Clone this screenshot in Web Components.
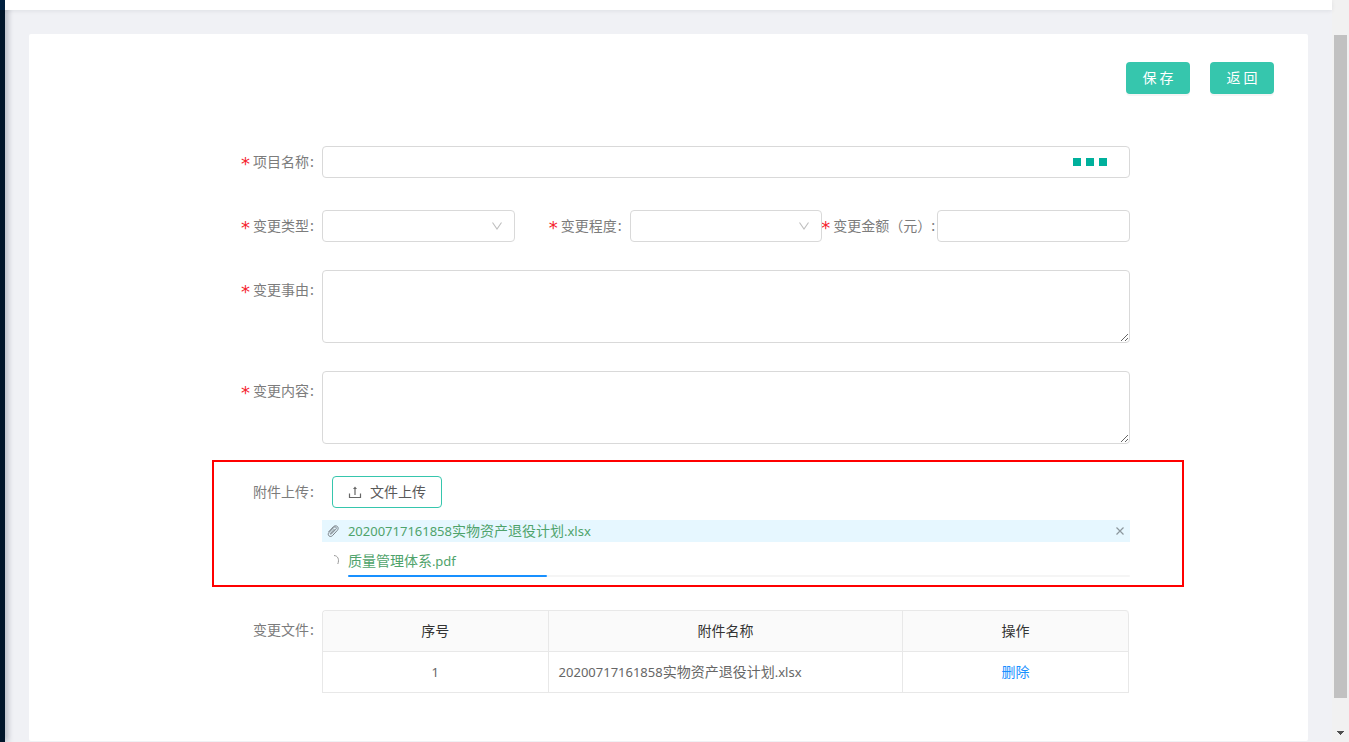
<!DOCTYPE html>
<html lang="zh-CN">
<head>
<meta charset="utf-8">
<title>项目变更</title>
<style>
  html, body { height: 100%; margin: 0; }
  body {
    font: 14px/22px "Noto Sans CJK SC", sans-serif;
    color: #666;
    background: #f0f2f5;
    overflow: hidden;
  }
</style>
</head>
<body>
<app-shell>
  <form-panel>
    <action-button slot="actions">保 存</action-button>
    <action-button slot="actions">返 回</action-button>

    <field-row><form-field kind="picker" label="项目名称" required></form-field></field-row>
    <field-row>
      <form-field kind="select" label="变更类型" required></form-field>
      <form-field kind="select" label="变更程度" required></form-field>
      <form-field kind="text" label="变更金额（元）" required wide></form-field>
    </field-row>
    <field-row><form-field kind="area" label="变更事由" required></form-field></field-row>
    <field-row><form-field kind="area" label="变更内容" required></form-field></field-row>
    <upload-section>
      <file-item name="20200717161858实物资产退役计划.xlsx"></file-item>
      <file-item name="质量管理体系.pdf" progress="25.4"></file-item>
    </upload-section>
    <file-table></file-table>
  </form-panel>
</app-shell>

<script>
const base = `<style>
  *, *::before, *::after { box-sizing: border-box; }
  :host { display: block; box-sizing: border-box; }
  button, input, select, textarea { font: inherit; color: inherit; margin: 0; }
  svg { display: block; flex: none; }
  a { text-decoration: none; }
  .latin { font-family: "Noto Sans", sans-serif; font-size: 13px; }
</style>`;

const labelStyle = `<style>
  .label {
    display: flex; align-items: center; justify-content: flex-end;
    height: 40px; padding: 0 8px 2px 0; white-space: nowrap; color: #7c7c7c;
  }
  .star { color: #f5222d; font: 18px/18px "DejaVu Sans", sans-serif; padding-top: 6px; margin-right: 3px; }
  .colon { margin-left: 1px; }
</style>`;

/* Runs of Latin letters and digits in a file name get their own face. */
const mixed = text => text.replace(/[\x21-\x7e]+/g, '<span class="latin">$&</span>');

function define(name, render) {
  customElements.define(name, class extends HTMLElement {
    connectedCallback() {
      if (this.shadowRoot) return;
      this.attachShadow({ mode: 'open' }).innerHTML = base + render(this);
    }
  });
}

define('app-shell', () => `
  <style>
    :host { display: flex; height: 100vh; overflow: hidden; }
    .side { flex: none; width: 5px; background: linear-gradient(#002140 10px, #001529 10px); box-shadow: 2px 0 6px rgba(0,21,41,.35); z-index: 1; }
    main { flex: 1; min-width: 0; background: #f0f1f5; }
    header { height: 10px; background: #fff; box-shadow: 0 1px 4px rgba(0,21,41,.08); position: relative; z-index: 2; }
    .content { padding: 24px; }
    .bar { flex: none; width: 17px; padding: 35px 2px 5px; background: #f1f1f1; display: flex; flex-direction: column; align-items: center; }
    .thumb { flex: 1; width: 100%; background: #c1c1c1; margin-bottom: 32px; }
  </style>
  <div class="side"></div>
  <main><header></header><div class="content"><slot></slot></div></main>
  <div class="bar" aria-hidden="true">
    <div class="thumb"></div>
    <svg width="7" height="7" viewBox="0 0 7 7" shape-rendering="crispEdges"><path d="M0 1h7v1H6v1H5v1H4v1H3V4H2V3H1V2H0z" fill="#505050"/></svg>
  </div>`);

define('form-panel', () => `
  <style>
    :host { background: #fff; border-radius: 2px; padding: 28px 0 48px; }
    .actions { display: flex; justify-content: flex-end; gap: 20px; padding-right: 34px; margin-bottom: 48px; }
    .form { margin: 0 9.7% 0 14.3%; }
  </style>
  <div class="actions"><slot name="actions"></slot></div>
  <div class="form"><slot></slot></div>`);

define('action-button', () => `
  <style>
    button {
      display: block; height: 32px; width: 64px; padding: 0 0 2px; border: 0; border-radius: 4px;
      background: #36c6ad; color: #fff; line-height: 30px; white-space: nowrap;
      box-shadow: 0 2px 0 rgba(0,0,0,.04); cursor: pointer;
    }
  </style>
  <button type="button"><slot></slot></button>`);

define('field-row', () => `
  <style>
    :host { display: flex; padding-right: 54px; margin-bottom: 24px; }
    ::slotted(*) { flex: 1 1 115px; min-width: 0; --label-width: 115px; }
    ::slotted(:first-child) { flex-basis: 110px; --label-width: 110px; }
    :host(:nth-of-type(4)) { margin-bottom: 12px; }
  </style>
  <slot></slot>`);

const controls = {
  picker: `<div class="box"><input id="c"><button type="button" aria-label="选择项目"><i></i><i></i><i></i></button></div>`,
  select: `<div class="box"><select id="c"><option></option></select>
    <svg class="arrow" width="12" height="12" viewBox="0 0 12 12"><path d="M1.500 2.500 6 9l4.500-6.500" fill="none" stroke="#bfbfbf" stroke-width="1.100"/></svg></div>`,
  text: `<div class="box"><input id="c"></div>`,
  area: `<textarea id="c"></textarea>`
};

define('form-field', el => `${labelStyle}
  <style>
    :host { display: grid; grid-template-columns: var(--label-width) 1fr; }
    :host([wide]) .label { padding-right: 2px; }
    :host([wide]) .colon { margin-left: 0; }
    .box { display: flex; align-items: center; position: relative; height: 32px; margin: 4px 0; border: 1px solid #d9d9d9; border-radius: 4px; }
    .box input, select { flex: 1; width: 100%; min-width: 0; height: 100%; border: 0; padding: 0 11px; background: transparent; outline: 0; appearance: none; border-radius: 4px; }
    textarea { display: block; width: 100%; height: 73px; margin-bottom: 4px; padding: 4px 11px; border: 1px solid #d9d9d9; border-radius: 4px; resize: vertical; background: #fff; }
    .box button { display: flex; gap: 5px; padding: 0; border: 0; background: none; margin-right: 22px; cursor: pointer; }
    i { width: 8px; height: 8px; background: #00b09c; }
    .arrow { position: absolute; right: 11px; top: 9px; pointer-events: none; }
  </style>
  <label class="label" for="c">${el.hasAttribute('required') ? '<span class="star">*</span>' : ''}<span>${el.getAttribute('label')}</span><span class="colon">:</span></label>
  <div>${controls[el.getAttribute('kind')]}</div>`);

define('upload-section', () => `${labelStyle}
  <style>
    :host { border: 2px solid #f00; padding: 10px 52px 8px 0; margin-bottom: 23px; display: grid; grid-template-columns: 108px 1fr; }
    .up {
      display: flex; align-items: center; gap: 8px; height: 32px; margin: 4px 0 12px 10px; padding: 0 15px;
      border: 1px solid #36c6ad; border-radius: 4px; background: #fff; color: #595959; cursor: pointer; white-space: nowrap;
    }
    .up span { padding-bottom: 2px; }
  </style>
  <label class="label" for="up"><span>附件上传</span><span class="colon">:</span></label>
  <div>
    <button class="up" id="up" type="button">
      <svg width="14" height="14" viewBox="0 0 14 14" fill="none" stroke="#666" stroke-width="1.200"><path d="M1.500 8.500v4h11v-4M7 10V3"/><path d="M5 4 7 1.500 9 4z" fill="#666" stroke="none"/></svg>
      <span>文件上传</span>
    </button>
    <slot></slot>
  </div>`);

define('file-item', el => {
  const progress = el.getAttribute('progress');
  const clip = `<svg class="icon" width="12" height="14" viewBox="0 0 12 14" fill="none" stroke="#777f86" stroke-width="1"><path d="M1.500 8 6.300 2.800C7.500 1.600 9.300 1.500 10.400 2.500c1 1 1 2.600 0 3.800l-4.900 5.300c-1 1-2.500 1.200-3.500.3s-1-2.300-.1-3.300l4.900-5.200c.7-.7 1.500-.7 2.100-.2.600.6.600 1.300 0 2L4.300 10.100c-.6.500-1.300-.1-.8-.8L7.500 5"/></svg>`;
  const spin = `<svg class="icon" width="12" height="14" viewBox="0 0 12 14" fill="none" stroke="#999" stroke-width="1"><path d="M7 1.500c4 .3 5.500 4 3.800 8.500"/></svg>`;
  return `
  <style>
    .row { display: flex; align-items: center; height: 22px; padding: 0 5px; }
    .icon { margin-right: 9px; }
    .done { background: #e6f7ff; margin-bottom: 8px; }
    a { flex: 1; min-width: 0; color: #4fa36b; line-height: 22px; white-space: nowrap; padding-bottom: 2px; }
    button { padding: 0; border: 0; background: none; cursor: pointer; }
    .track { height: 2px; margin: 3px 0 0 26px; background: #f5f5f5; border-radius: 1px; }
    .fill { height: 100%; background: #1890ff; border-radius: 1px; }
  </style>
  <div class="row ${progress ? '' : 'done'}">${progress ? spin : clip}<a href="#">${mixed(el.getAttribute('name'))}</a>
    ${progress ? '' : '<button type="button" aria-label="移除"><svg width="10" height="10" viewBox="0 0 10 10"><path d="M1.500 1.500l7 7M8.500 1.500l-7 7" stroke="#8c979d" stroke-width="1.200"/></svg></button>'}
  </div>
  ${progress ? `<div class="track" role="progressbar" aria-label="上传进度" aria-valuenow="${progress}"><div class="fill" style="width:${progress}%"></div></div>` : ''}`;
});

define('file-table', () => `${labelStyle}
  <style>
    :host { display: grid; grid-template-columns: 110px 1fr; padding-right: 55px; }
    table { width: 100%; table-layout: fixed; border-spacing: 0; border: solid #e8e8e8; border-width: 1px 0 0 1px; border-radius: 4px 4px 0 0; }
    th, td { height: 41px; padding: 0 10px 2px; border: solid #e8e8e8; border-width: 0 1px 1px 0; text-align: center; font-weight: 400; }
    th { background: #fafafa; color: #333; }
    th:first-child { border-top-left-radius: 4px; }
    th:last-child { border-top-right-radius: 4px; }
    td.name { text-align: left; }
    a { color: #1890ff; }
    .s { width: 28%; } .m { width: 44%; }
  </style>
  <div class="label" id="t"><span>变更文件</span><span class="colon">:</span></div>
  <table aria-labelledby="t">
    <colgroup><col class="s"><col class="m"><col class="s"></colgroup>
    <thead><tr><th>序号</th><th>附件名称</th><th>操作</th></tr></thead>
    <tbody><tr><td>${mixed('1')}</td><td class="name">${mixed('20200717161858实物资产退役计划.xlsx')}</td><td><a href="#">删除</a></td></tr></tbody>
  </table>`);
</script>
</body>
</html>
